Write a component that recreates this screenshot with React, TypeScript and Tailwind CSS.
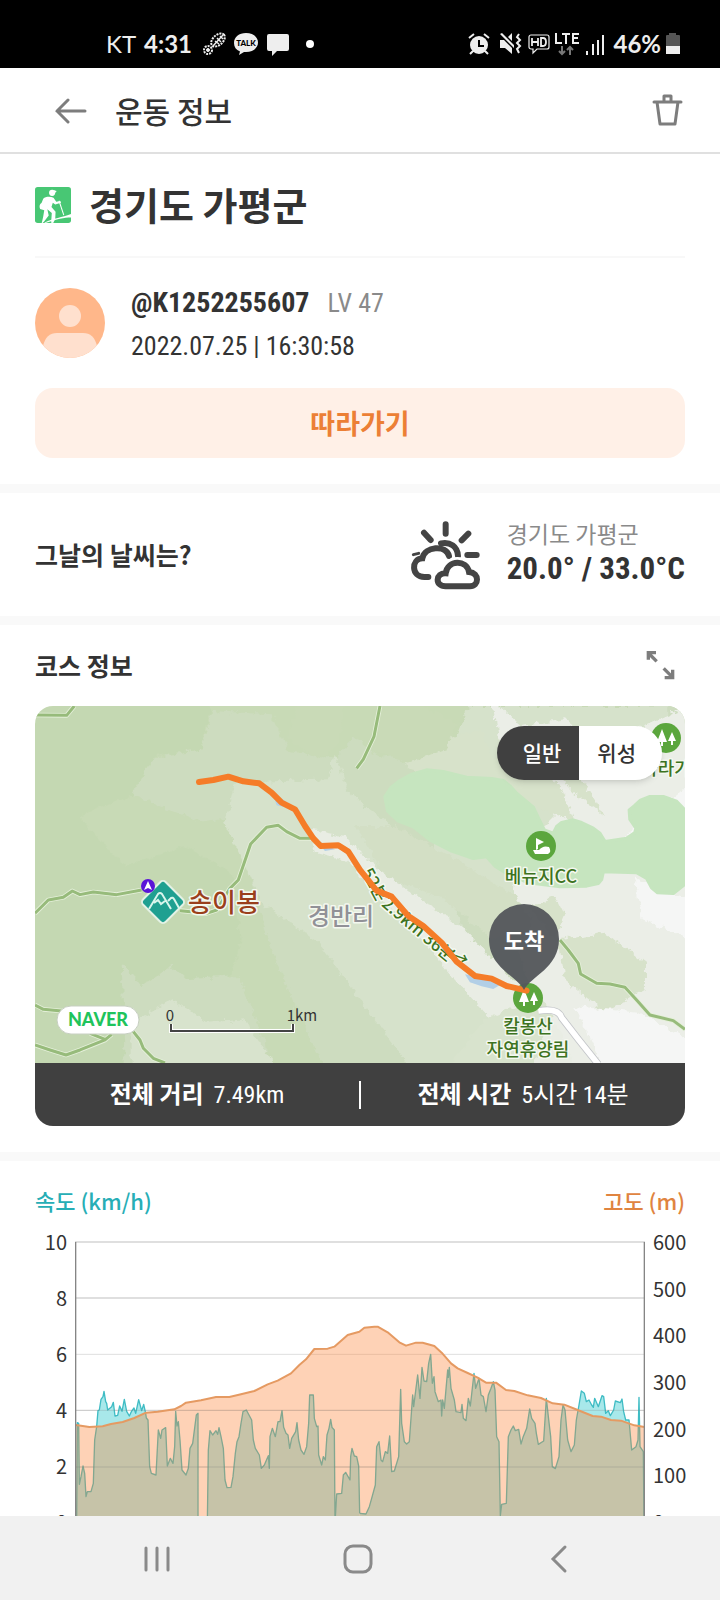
import React, { useState } from "react";

const altitude =
  "3,555 18,557 43,561 83,559 108,552 143,546 178,534 213,518 248,515 298,508 318,498 333,488 378,481 423,471 463,471 498,463 538,453 578,433 608,422 648,400 673,375 693,358 718,327 758,326 778,320 801,300 818,285 853,275 868,263 898,260 908,260 938,277 973,307 993,317 1023,308 1043,308 1078,318 1100,338 1128,370 1148,385 1178,399 1208,413 1233,428 1263,428 1293,450 1318,453 1358,466 1398,474 1433,490 1468,494 1508,510 1553,528 1578,530 1608,540 1638,542 1678,556 1708,561";

const speedOut =
  "5,850 7,548 11,550 13,733 18,710 24,678 29,700 33,770 37,755 48,755 55,730 59,600 65,560 69,512 73,510 78,478 84,470 87,454 92,485 95,490 98,510 110,500 115,487 120,528 128,526 134,498 141,514 148,478 155,514 163,528 169,515 177,504 182,520 191,479 200,512 206,493 212,520 214,534 219,540 224,680 229,700 243,705 250,570 257,595 261,570 272,563 277,678 286,655 294,670 299,620 302,514 306,558 310,545 315,600 321,690 333,705 340,685 345,625 353,610 364,525 369,520 369,850 397,850 400,630 405,572 413,585 423,572 428,583 432,563 438,590 445,625 450,720 456,743 468,742 474,710 481,640 486,605 492,590 498,550 504,515 514,510 522,525 530,540 535,600 541,625 553,645 559,685 568,675 580,647 583,685 585,590 592,565 601,590 609,545 615,545 621,512 626,562 633,580 639,585 644,625 650,595 662,575 666,548 671,600 678,630 687,643 695,620 701,550 704,465 715,465 718,535 725,560 729,558 731,645 740,675 745,650 751,660 756,585 762,565 767,538 771,562 778,570 780,850 785,762 800,760 805,705 812,697 825,720 827,650 831,625 838,648 845,650 851,678 854,820";

const speedBack =
  "854,820 873,822 883,800 890,775 901,735 905,620 912,605 918,660 923,665 931,635 938,640 944,588 950,695 958,693 971,650 977,448 980,550 988,605 995,612 1003,605 1013,465 1016,500 1028,405 1035,475 1041,382 1047,423 1055,425 1061,370 1067,343 1072,430 1077,410 1080,455 1090,485 1098,480 1100,528 1103,480 1108,505 1118,390 1120,412 1123,382 1128,445 1138,480 1143,515 1158,518 1161,493 1165,535 1173,542 1180,475 1186,498 1197,400 1202,445 1212,415 1218,465 1225,470 1233,515 1240,465 1248,445 1255,425 1260,450 1265,590 1272,605 1276,827 1280,793 1294,790 1300,590 1308,570 1315,558 1321,572 1331,568 1338,612 1344,592 1355,565 1364,507 1370,535 1380,550 1384,580 1390,613 1406,603 1414,475 1420,530 1427,590 1432,680 1441,686 1452,650 1458,540 1464,495 1470,510 1478,600 1488,635 1498,615 1504,540 1512,495 1519,453 1528,460 1534,485 1542,480 1550,495 1555,502 1559,475 1570,500 1581,467 1586,470 1592,520 1600,512 1606,527 1616,510 1621,483 1636,488 1641,477 1646,515 1652,540 1662,540 1670,630 1683,620 1689,600 1692,472 1695,620 1705,635 1707,850";

const golfCourse =
  "1050,272 1068,245 1095,224 1130,205 1175,192 1225,197 1295,214 1370,218 1405,224 1425,240 1445,262 1495,304 1512,340 1528,372 1555,382 1565,362 1580,350 1615,342 1640,350 1675,367 1695,382 1710,407 1775,397 1800,380 1803,366 1785,340 1783,312 1798,300 1815,284 1845,272 1885,272 1925,286 1950,312 1950,535 1915,562 1868,560 1850,545 1835,517 1805,500 1705,497 1700,520 1690,532 1655,540 1575,542 1480,530 1415,502 1380,480 1355,452 1315,457 1250,435 1185,402 1135,362 1090,345 1058,315";

const trails = [
  "0,27 95,28 118,0",
  "0,622 40,582 85,574 112,555 135,566 175,558 245,566 320,552",
  "435,614 515,622 545,612 585,547 610,522 647,414 695,364 730,358 755,377 795,397 830,397",
  "1035,0 1017,92 985,160 965,187",
  "0,897 25,910 80,915",
  "0,1017 45,1032 93,1047 135,1032 210,1002 230,985",
  "165,982 210,1000",
  "295,977 315,1002 325,1027 355,1057 390,1071",
  "1575,702 1600,732 1630,772 1637,804 1685,832 1725,834 1770,844 1805,882 1845,927 1915,944 1950,970",
];

const StatusBar = () => (
  <div className="flex h-[68px] shrink-0 items-end justify-between bg-black pr-[39px] pb-2 pl-[106px] text-[#eeeeee]">
    <div className="flex h-8 items-center">
      <span className="font-[Lato] text-2xl">KT</span>
      <span className="ml-2 font-[Lato] text-2xl font-bold">4:31</span>
      <svg className="ml-[10px] h-6 w-6" viewBox="0 0 24 24" fill="none" stroke="currentColor">
        <ellipse cx="16" cy="8" rx="8" ry="5" transform="rotate(-42 16 8)" strokeWidth="2" strokeDasharray="2 1" />
        <path d="M11 14 21 3M13 9l4 3M15 6l4 4M18 4l3 3" strokeWidth="1.5" />
        <circle cx="6" cy="18" r="4" strokeWidth="2" strokeDasharray="2 1" />
        <circle cx="6" cy="18" r="1.5" fill="currentColor" />
      </svg>
      <svg className="ml-2 h-6 w-6" viewBox="0 0 24 24" fill="currentColor">
        <path d="M12 1C5 1 0 5 0 11c0 4 2 7 6 8.500l-1 3.500 5-3h2c7 0 12-4 12-9.500S19 1 12 1z" />
        <text x="12" y="14" textAnchor="middle" fontSize="8" fontWeight="900" fill="#000" fontFamily="Lato">
          TALK
        </text>
      </svg>
      <svg className="ml-2 h-6 w-6" viewBox="0 0 24 24" fill="currentColor">
        <path d="M3 2h18a2 2 0 0 1 2 2v13a2 2 0 0 1-2 2H11l-5 5v-5H3a2 2 0 0 1-2-2V4a2 2 0 0 1 2-2z" />
      </svg>
      <span className="ml-4 h-2 w-2 rounded-full bg-white"></span>
    </div>
    <div className="flex h-8 items-center">
      <svg className="h-6 w-6" viewBox="0 0 24 24" fill="currentColor">
        <circle cx="12" cy="13" r="9" />
        <path d="M2 6l5-4M22 6l-5-4M6 19l-3 3M18 19l3 3" stroke="currentColor" strokeWidth="2" />
        <path d="M12 8v6h5" fill="none" stroke="#000" strokeWidth="2" />
      </svg>
      <svg className="ml-2 h-6 w-6" viewBox="0 0 24 24" fill="currentColor">
        <path d="M1 8h4l8 8v6l-7-6H1zM9 5l4-4v8zM1 2l2-1 12 12v3z" />
        <path d="M20 2l-2 3 3 3-3 3 3 3-3 3 2 4" fill="none" stroke="currentColor" strokeWidth="2" />
      </svg>
      <svg className="ml-1 h-6 w-6" viewBox="0 0 24 24" fill="none" stroke="currentColor">
        <path d="M4 3h16a2 2 0 0 1 2 2v10a2 2 0 0 1-2 2H10l-4 4v-4H4a2 2 0 0 1-2-2V5a2 2 0 0 1 2-2z" strokeWidth="1.200" />
        <path d="M5 6v8M11 6v8M5 10h6M14 6v8h2c4 0 4-8 0-8z" strokeWidth="1.800" />
      </svg>
      <svg className="ml-1 h-6 w-6" viewBox="0 0 24 24" fill="none" stroke="currentColor">
        <path d="M1 1v10h6M7 2h8M11 2v10M24 2h-6v9h6M18 6h5" strokeWidth="2" />
        <path d="M7 14v8M4 19l3 3 3-3M15 23v-8M12 18l3-3 3 3" stroke="#777" strokeWidth="2" />
      </svg>
      <svg className="ml-[6px] h-6 w-5" viewBox="0 0 20 24" fill="none" stroke="currentColor" strokeWidth="2">
        <path d="M2 23v-4M8 23V12M13 23V8M18 23V3" />
      </svg>
      <span className="ml-2 font-[Lato] text-2xl font-bold">46%</span>
      <svg className="ml-1 h-6 w-4" viewBox="0 0 16 24">
        <path d="M4 3V1h7v2h3a1 1 0 0 1 1 1v10H1V4a1 1 0 0 1 1-1z" fill="#555" />
        <path d="M1 14h14v8H1z" fill="#eee" />
      </svg>
    </div>
  </div>
);

const Header = () => (
  <header className="flex h-[86px] shrink-0 items-center border-b-2 border-[#e0e0e0] px-[35px]">
    <button type="button" aria-label="뒤로" className="ml-4 p-1">
      <svg className="h-8 w-8" viewBox="0 0 32 32" fill="none" stroke="#7d7d7d" strokeWidth="3" strokeLinecap="round">
        <path d="M2 17h28M13 6 2 17l11 11" />
      </svg>
    </button>
    <h1 className="ml-6 text-3xl font-medium">운동 정보</h1>
    <button type="button" aria-label="삭제" className="ml-auto">
      <svg className="h-9 w-9" viewBox="0 0 36 36" fill="none" stroke="#7d7d7d" strokeWidth="3">
        <path d="M5 10h27M8 10l3 22h15l3-22M15 9V4h7v5" strokeLinejoin="round" strokeLinecap="round" />
      </svg>
    </button>
  </header>
);

const Profile = () => (
  <section className="px-[35px] pb-[26px]">
    <div className="flex h-[104px] items-center gap-[18px] border-b-2 border-[#f8f8f8]">
      <svg className="h-9 w-9" viewBox="0 0 105 105">
        <rect width="105" height="105" rx="8" fill="#48c774" />
        <g fill="#fff">
          <circle cx="50" cy="17" r="9" />
          <path d="M53 9l10 3-3 5z" />
          <path d="M24 34c6-6 20-7 30-3l8 12 12-2 2 5-17 5-7-5-4 12 12 14-1 21-6 12-6-1 2-28-13-11 4 18-14 18-7 7 5-22 3-18-12-4c-4-8 0-16 4-17z" />
          <path d="M105 79v10c-20 0-40 5-75 16l-3-1c30-14 50-14 78-25z" />
        </g>
        <path d="M70 40l14 42" stroke="#fff" strokeWidth="3" />
      </svg>
      <h2 className="pb-1 text-[38px] font-bold">경기도 가평군</h2>
    </div>
    <div className="flex h-[130px] items-center gap-[26px]">
      <svg className="h-[70px] w-[70px] rounded-full" viewBox="0 0 70 70">
        <rect width="70" height="70" fill="#ffb78a" />
        <circle cx="35" cy="28" r="11" fill="#ffe0ce" />
        <path d="M8 70V58q3-13 14-13h26q11 0 14 13v12z" fill="#ffe0ce" />
      </svg>
      <div className="pt-[2px] font-['Roboto_Condensed','Noto_Sans_CJK_KR',sans-serif] leading-[43px]">
        <div className="flex items-baseline gap-[18px]">
          <span className="text-[28px] leading-[43px] font-bold">@K1252255607</span>
          <span className="text-[26px] leading-[43px] text-[#8a8a8a]">LV 47</span>
        </div>
        <div className="text-[26px] leading-[43px]">2022.07.25 | 16:30:58</div>
      </div>
    </div>
    <button type="button" className="h-[70px] w-full rounded-[18px] bg-[#fff0e7] text-[27px] font-bold text-[#ec7f35]">
      따라가기
    </button>
  </section>
);

const Weather = () => (
  <section className="flex h-[141px] items-center justify-between border-y-[9px] border-[#f9f9f9] px-[35px]">
    <h3 className="text-[25px] font-bold">그날의 날씨는?</h3>
    <div className="flex items-center gap-[26px]">
      <svg className="h-[72px] w-[72px]" viewBox="152 114 216 216" fill="none" stroke="#444" strokeWidth="18" strokeLinecap="round">
        <path d="M262 130v28M197 155l20 22M330 158l-20 20M327 222h28M248 187c27-6 50 10 51 38" />
        <path d="M165 221l16-4" strokeWidth="9" />
        <path d="M210 288h-12c-40 0-40-54-6-56 8-36 70-42 80-7" />
        <path d="M262 316h73c27 0 30-40-3-43-7-38-64-38-70 4-30-2-34 39 0 39z" stroke="#fff" strokeWidth="34" />
        <path d="M262 316h73c27 0 30-40-3-43-7-38-64-38-70 4-30-2-34 39 0 39z" fill="#fff" />
      </svg>
      <div className="pb-1">
        <div className="text-[23px] leading-8 text-[#8a8a8a]">경기도 가평군</div>
        <div className="font-['Roboto_Condensed','Noto_Sans_CJK_KR',sans-serif] text-[31px] leading-10 font-bold">
          20.0° / 33.0°C
        </div>
      </div>
    </div>
  </section>
);

const Trees = ({ x, y }: { x: number; y: number }) => (
  <g transform={`translate(${x} ${y})`}>
    <circle r="15" fill="#5ba63d" />
    <path d="M-4-9l5 13h-4v4h-2V4h-4zM6-6l4 9H7v4H5V3H2z" fill="#fff" />
  </g>
);

const CourseMap = () => (
  <svg className="block w-full" viewBox="0 0 650 357" role="img" aria-label="코스 지도">
    <defs>
      <filter id="rough" x="-5%" y="-5%" width="110%" height="110%">
        <feTurbulence type="fractalNoise" baseFrequency="0.05" numOctaves="3" seed="4" />
        <feDisplacementMap in="SourceGraphic" scale="26" xChannelSelector="R" yChannelSelector="G" />
      </filter>
      <path id="trailText" d="M326 166 342 196 371 221 408 252 450 267" />
    </defs>
    <rect width="650" height="357" fill="#c4d8b2" />
    <g transform="scale(0.3333)">
      <g filter="url(#rough)">
        <path d="M130 330l160-60 70-120 140-20 30-140h300l1200-30v1200H620L560 900 620 700l-30-200-140-80-180 60z" fill="#c8dab6" />
        <path d="M290 265l70-110 140-25 30-115 180 10 50 110 140 20 60-60 80 60 1000-200v1200H900L780 900 700 700l-60-200-20-170-120 20z" fill="#cddcbf" />
        <path d="M270 1100l-10-330 60 70 90-60 40 40 160-10 80 200 20 100z" fill="#cddcbf" />
        <path d="M290 1100l0-150 120-70 110 70 110-10 90 140z" fill="#d8e3cd" />
        <path d="M600 230l280 -10 20-80 40 120 130 100 330 250 500 0V0h-600l-60 150-120 60 180 500 230 380h-400l-280-380-170-120-110-240z" fill="#d6e2cb" />
        <path d="M820 370l110 20 80 80 120 90 160 110 140 150 520 250v30h-700l110-110 0-60-120-130-140-180-70-40-80-110-110-30z" fill="#e9ede4" />
        <path d="M1370-20l90 80 130-20 100 80 270-120v1150h-320l-60-170-100-150-60-180 20-120-60-190 120 50 60-60-90-200-80-30z" fill="#ebeee7" />
        <path d="M1100 130l240-60 30 80 200 80 50 120-180-80-320-80zM1560 200l80 20 70 110-90-70zM1480 600l80-30 30 60-30 70zM1570 700l140-20 120 90 0 80-120 70-120-100z" fill="#d7e2ca" />
        <path d="M960 360l120 0 200 110 160 100 50 70-20 80-110-30-130-110-180-70z" fill="#d3dfc5" />
        <path d="M1240 1080l110-140 160-70 40 60-60 150z" fill="#d8e3cd" />
        <path d="M1760 400l200-160v60l-90 120zM1800 520l160 60v120l-140-60zM1620 900l190 20 150 80v90h-250z" fill="#f5f6f5" />
        <path d="M1000 130l30-110 110-30 130 60-40 80-110 40zM760 100l30-110 140 10-20 120-60 40z" fill="#c9dab7" />
      </g>
      <polygon points={golfCourse} fill="#c6e5bf" stroke="#c6e5bf" strokeWidth="10" strokeLinejoin="round" />
      <path d="M1290 805l60 10 45 22-20 12-35-8-35-12zM670 232l45 36 10 30 22 5 8-15zM840 400l30 35 30-5-30-15z" fill="#b2cfe6" />
      <path d="M1510 915q60-10 70 20l50 65 60 75" fill="none" stroke="#c3c5c9" strokeWidth="22" />
      <path d="M1510 915q60-10 70 20l50 65 60 75" fill="none" stroke="#fff" strokeWidth="17" />
      <g fill="none" strokeLinejoin="round">
        {trails.map((points) => (
          <polyline key={points} points={points} stroke="#e5f0da" strokeWidth="14" />
        ))}
        {trails.map((points) => (
          <polyline key={points} points={points} stroke="#97bb7b" strokeWidth="9" />
        ))}
      </g>
    </g>
    <g
      fontFamily="'Noto Sans CJK KR', sans-serif"
      fontSize="18"
      fontWeight="500"
      fill="#3d7321"
      stroke="#f4f8ef"
      strokeWidth="3"
      paintOrder="stroke"
      strokeLinejoin="round"
      textAnchor="middle"
    >
      <text textAnchor="start" fontSize="17">
        <textPath href="#trailText">52분 2.9km 36분→</textPath>
      </text>
      <text x="506" y="177">베뉴지CC</text>
      <text x="631" y="69">자라가</text>
      <text x="493" y="327">칼봉산</text>
      <text x="493" y="350">자연휴양림</text>
      <text x="189" y="206" fontSize="26" fill="#9a3f1c">송이봉</text>
      <text x="306" y="219" fontSize="24" fill="#919197">경반리</text>
    </g>
    <Trees x={631} y={32} />
    <Trees x={493} y={292} />
    <circle cx="506" cy="140" r="15" fill="#5ba63d" />
    <path d="M501 144v-12l8 4-6 3v4zM498 144h6q4-5 10-3 3 5-1 7h-13z" fill="#fff" />
    <polyline
      transform="scale(0.3333)"
      points="492,228 535,222 580,212 625,226 673,232 710,260 740,290 780,310 810,360 835,397 857,420 910,418 940,437 975,492 1025,554 1070,572 1120,630 1165,660 1220,710 1265,767 1320,810 1370,818 1415,840 1475,854"
      fill="none"
      stroke="#f57c28"
      strokeWidth="18"
      strokeLinecap="round"
      strokeLinejoin="round"
    />
    <rect x="112" y="180" width="32" height="32" rx="4" transform="rotate(45 128 196)" fill="#1fa091" stroke="#e3f2e6" strokeWidth="2" />
    <path d="M114 203l9-15q2-2 4 0l9 15M119 197l4-3 3 4 4-3M133 195l3-3q2-1 3 1l5 9" fill="none" stroke="#d8f5ec" strokeWidth="2" />
    <circle cx="113" cy="180" r="7" fill="#5a14d8" />
    <path d="M113 175l4 9-4-2-4 2z" fill="#fff" />
    <path d="M489 284c-7-14-35-22-35-51a35 35 0 0 1 70 0c0 29-28 37-35 51z" fill="#54575c" fillOpacity="0.96" />
    <text x="489" y="243" textAnchor="middle" fontSize="22" fontWeight="700" fill="#fff" fontFamily="'Noto Sans CJK KR', sans-serif">
      도착
    </text>
    <rect x="22" y="300" width="82" height="28" rx="14" fill="#fff" stroke="#c7cfc1" />
    <text x="63" y="320" textAnchor="middle" fontSize="18" fontWeight="900" fill="#1fc45c" fontFamily="Lato, sans-serif">
      NAVER
    </text>
    <path d="M136 318v7h122v-7" fill="none" stroke="#fff" strokeWidth="4" />
    <path d="M136 318v7h122v-7" fill="none" stroke="#444" strokeWidth="2" />
    <g fontFamily="'Noto Sans CJK KR', sans-serif" fontSize="15" fill="#333" textAnchor="middle">
      <text x="135" y="315">0</text>
      <text x="267" y="315">1km</text>
    </g>
  </svg>
);

const Course = () => {
  const [satellite, setSatellite] = useState(false);

  return (
    <section className="px-[35px] pb-[26px]">
      <div className="flex h-[81px] items-center justify-between">
        <h3 className="text-[25px] font-bold">코스 정보</h3>
        <button type="button" aria-label="지도 확대" className="mr-2">
          <svg className="h-8 w-8" viewBox="855 512 96 96" fill="none" stroke="#7d7d7d" strokeWidth="10">
            <path d="M890 546l-22-22M865 541v-21h23M911 567l24 24M938 571v24h-24" />
          </svg>
        </button>
      </div>
      <div className="overflow-hidden rounded-[18px]">
        <div className="relative">
          <CourseMap />
          <div className="absolute top-5 right-[23px] flex h-[54px] overflow-hidden rounded-full text-[21px] font-medium shadow-md">
            <button
              type="button"
              aria-pressed={!satellite}
              onClick={() => setSatellite(false)}
              className="bg-[#404040] pr-[18px] pl-[26px] text-white"
            >
              일반
            </button>
            <button
              type="button"
              aria-pressed={satellite}
              onClick={() => setSatellite(true)}
              className="bg-white pr-[26px] pl-[18px]"
            >
              위성
            </button>
          </div>
        </div>
        <div className="flex h-[63px] items-center bg-[#404040] font-['Roboto_Condensed','Noto_Sans_CJK_KR',sans-serif] text-2xl text-white">
          <div className="flex flex-1 items-baseline justify-center gap-[10px]">
            <span className="font-bold">전체 거리</span>
            <span>7.49km</span>
          </div>
          <span className="h-7 w-[2px] bg-white"></span>
          <div className="flex flex-1 items-baseline justify-center gap-[10px]">
            <span className="font-bold">전체 시간</span>
            <span>5시간 14분</span>
          </div>
        </div>
      </div>
    </section>
  );
};

const AxisLabels = ({ values, className }: { values: number[]; className: string }) => (
  <ul className={`flex w-8 shrink-0 flex-col justify-between py-[2px] text-xl leading-5 ${className}`}>
    {values.map((value) => (
      <li key={value} className="flex h-0 items-center">
        {value}
      </li>
    ))}
  </ul>
);

const SpeedChart = () => (
  <section className="border-t-[9px] border-[#f9f9f9] px-[35px]">
    <div className="flex h-[79px] items-center justify-between text-[22px] font-medium">
      <span className="text-[#27aeb6]">속도 (km/h)</span>
      <span className="text-[#e08440]">고도 (m)</span>
    </div>
    <div className="flex gap-2">
      <AxisLabels values={[10, 8, 6, 4, 2, 0]} className="items-end" />
      <svg className="block min-w-0 flex-1" viewBox="0 0 1710 852" role="img" aria-label="속도와 고도">
        <path d="M0 6h1710M0 174h1710" stroke="#dfdfdf" strokeWidth="6" />
        <path d="M0 343h1710M0 511h1710M0 681h1710" stroke="#dfdfdf" strokeWidth="3" />
        <g fill="#a8e8ea" stroke="#3fbcc4" strokeWidth="4" strokeLinejoin="round">
          <polygon points={`5,850 ${speedOut} 854,850`} stroke="none" />
          <polygon points={`854,850 ${speedBack}`} stroke="none" />
          <polyline points={speedOut} fill="none" />
          <polyline points={speedBack} fill="none" />
        </g>
        <polygon points={`3,852 ${altitude} 1708,852`} fill="#fc8234" fillOpacity="0.36" />
        <path d="M0 511h1710M0 681h1710" stroke="#777" strokeOpacity="0.2" strokeWidth="4" />
        <polyline points={altitude} fill="none" stroke="#e59a62" strokeWidth="6" strokeLinejoin="round" />
        <path d="M2 6v846M1708 6v846" stroke="#858585" strokeWidth="4" />
      </svg>
      <AxisLabels values={[600, 500, 400, 300, 200, 100, 0]} className="items-start" />
    </div>
  </section>
);

const NavBar = () => (
  <nav className="flex h-[84px] shrink-0 items-center justify-around bg-[#f1f1f1] pr-[60px] pl-14">
    <button type="button" aria-label="최근 앱">
      <svg className="h-8 w-8" viewBox="0 0 32 32" stroke="#8a8a8a" strokeWidth="3" strokeLinecap="round">
        <path d="M5 6v22M16 6v22M27 6v22" />
      </svg>
    </button>
    <button type="button" aria-label="홈">
      <svg className="h-8 w-8" viewBox="0 0 32 32" fill="none" stroke="#8a8a8a" strokeWidth="3">
        <rect x="3" y="4" width="26" height="26" rx="8" />
      </svg>
    </button>
    <button type="button" aria-label="이전">
      <svg className="h-8 w-8" viewBox="0 0 32 32" fill="none" stroke="#8a8a8a" strokeWidth="3" strokeLinecap="round">
        <path d="M22 5 10 17l12 12" />
      </svg>
    </button>
  </nav>
);

const App: React.FC = () => {
  return (
    <div className="flex h-screen flex-col bg-white font-['Noto_Sans_CJK_KR',sans-serif] text-[#333]">
      <StatusBar />
      <Header />
      <main className="min-h-0 flex-1 overflow-y-auto [scrollbar-width:none]">
        <Profile />
        <Weather />
        <Course />
        <SpeedChart />
      </main>
      <NavBar />
    </div>
  );
};

export default App;
